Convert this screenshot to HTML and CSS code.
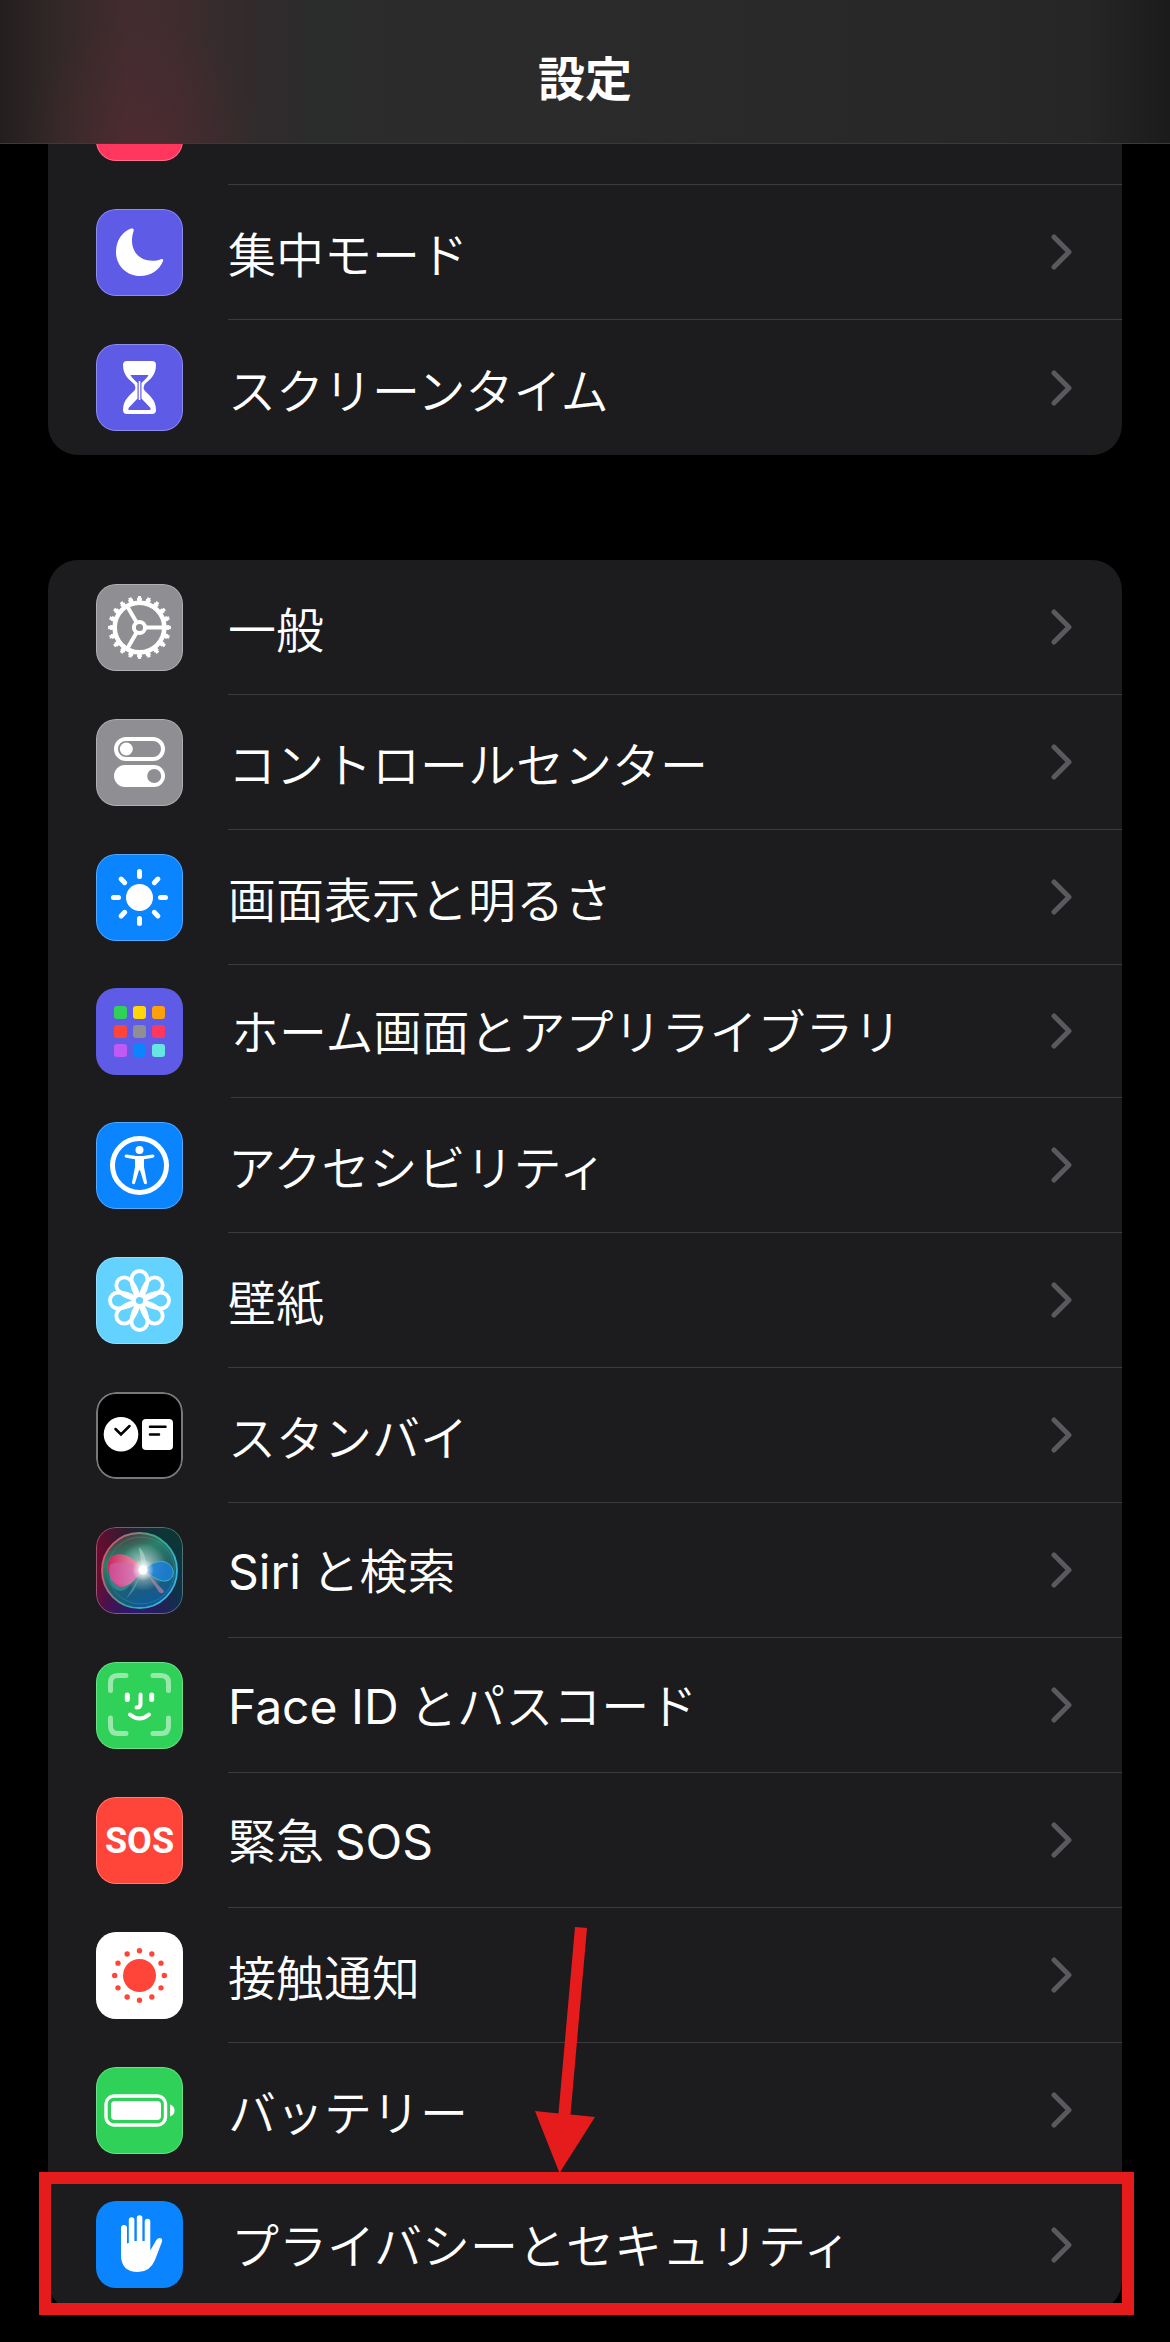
FILE: index.html
```html
<!DOCTYPE html>
<html lang="ja">
<head>
    <meta charset="UTF-8">
    <meta name="viewport" content="width=device-width, initial-scale=1.0">
    <title>設定</title>
    <link rel="stylesheet" href="styles.css">
</head>
<body>
    <svg class="defs" aria-hidden="true">
        <symbol id="chevron" viewBox="0 0 22 36">
            <path d="M3 3 L18 18 L3 33" fill="none" stroke="currentColor" stroke-width="5" stroke-linecap="round" stroke-linejoin="round"/>
        </symbol>
    </svg>

    <header class="header">
        <h1 class="title">設定</h1>
    </header>

    <main class="settings">
        <div class="group">
            <div class="row">
                <span class="icon pink"></span>
                <span class="row-body"></span>
            </div>
            <a class="row" href="#focus">
                <span class="icon indigo">
                    <svg viewBox="0 0 87 87" fill="#fff">
                        <path d="M35 19.6C26 23 20 32 20 43C20 56.5 30.5 67 44 67C54.5 67 63.5 61 67 52C67.6 50.3 66.5 49.6 65 50.2C62 51.3 59.5 51.7 56.5 51.7C44 51.7 36 43.5 36 31.5C36 28 36.6 25 37.6 22C38.2 20 37 19 35 19.6Z"/>
                    </svg>
                </span>
                <span class="row-body"><span class="label">集中モード</span><svg class="chevron"><use href="#chevron"/></svg></span>
            </a>
            <a class="row" href="#screentime">
                <span class="icon indigo">
                    <svg viewBox="0 0 87 87">
                        <path fill="#fff" d="M31 17H56Q60 17 60 21C60 32 53 36 48.5 40.5Q46.8 43.5 48.5 46.5C53 51 60 56 60 66Q60 70 56 70H31Q27 70 27 66C27 56 34 51 38.5 46.5Q40.2 43.5 38.5 40.5C34 36 27 32 27 21Q27 17 31 17Z"/>
                        <path fill="#5e5ce6" d="M34.5 31H52.5Q52 33 45.5 39V54.5L54.5 64V66H32.5V64L41.5 54.5V39Q35 33 34.5 31Z"/>
                        <path stroke="#fff" stroke-width="1.6" d="M43.5 37V56"/>
                    </svg>
                </span>
                <span class="row-body"><span class="label">スクリーンタイム</span><svg class="chevron"><use href="#chevron"/></svg></span>
            </a>
        </div>

        <div class="group">
            <a class="row" href="#general">
                <span class="icon gray">
                    <svg viewBox="0 0 87 87" fill="none" stroke="#fff">
                        <circle cx="43.5" cy="43.5" r="24.8" stroke-width="4.6"/>
                        <circle cx="43.5" cy="43.5" r="28" stroke-width="3" pathLength="40" stroke-dasharray="1.1 0.9" stroke-dashoffset="0.55"/>
                        <circle cx="43.5" cy="43.5" r="30" stroke-width="2.8" pathLength="40" stroke-dasharray="0.7 1.3" stroke-dashoffset="0.35"/>
                        <circle cx="43.5" cy="43.5" r="5.6" stroke-width="4"/>
                        <path stroke-width="4" d="M50 43.5H67M40.2 37.8L31.5 22.7M40.2 49.2L31.5 64.3"/>
                    </svg>
                </span>
                <span class="row-body"><span class="label">一般</span><svg class="chevron"><use href="#chevron"/></svg></span>
            </a>
            <a class="row" href="#control">
                <span class="icon gray">
                    <svg viewBox="0 0 87 87" fill="#fff">
                        <rect x="20" y="20" width="47" height="20" rx="10" fill="none" stroke="#fff" stroke-width="4"/>
                        <circle cx="30.3" cy="30" r="6.5"/>
                        <rect x="18" y="46" width="51" height="22" rx="11"/>
                        <circle cx="58.2" cy="57" r="7" fill="#8e8e93"/>
                    </svg>
                </span>
                <span class="row-body"><span class="label">コントロールセンター</span><svg class="chevron"><use href="#chevron"/></svg></span>
            </a>
            <a class="row" href="#display">
                <span class="icon blue">
                    <svg viewBox="0 0 87 87" fill="#fff" stroke="#fff">
                        <circle cx="43.5" cy="43.5" r="13.5" stroke="none"/>
                        <path stroke-width="5" stroke-linecap="round" d="M43.5 17.5V22.5M43.5 64.5V69.5M17.5 43.5H22.5M64.5 43.5H69.5M25.1 25.1L28.7 28.7M58.3 58.3L61.9 61.9M25.1 61.9L28.7 58.3M58.3 28.7L61.9 25.1"/>
                    </svg>
                </span>
                <span class="row-body"><span class="label">画面表示と明るさ</span><svg class="chevron"><use href="#chevron"/></svg></span>
            </a>
            <a class="row compact" href="#home">
                <span class="icon indigo flat">
                    <svg viewBox="0 0 87 87">
                        <rect x="18" y="18" width="13" height="13" rx="3" fill="#30d158"/>
                        <rect x="37" y="18" width="13" height="13" rx="3" fill="#ffd60a"/>
                        <rect x="56" y="18" width="13" height="13" rx="3" fill="#ff9f0a"/>
                        <rect x="18" y="37" width="13" height="13" rx="3" fill="#ff453a"/>
                        <rect x="37" y="37" width="13" height="13" rx="3" fill="#8e8e93"/>
                        <rect x="56" y="37" width="13" height="13" rx="3" fill="#ff375f"/>
                        <rect x="18" y="56" width="13" height="13" rx="3" fill="#bf5af2"/>
                        <rect x="37" y="56" width="13" height="13" rx="3" fill="#0a84ff"/>
                        <rect x="56" y="56" width="13" height="13" rx="3" fill="#66e6e2"/>
                    </svg>
                </span>
                <span class="row-body"><span class="label">ホーム画面とアプリライブラリ</span><svg class="chevron"><use href="#chevron"/></svg></span>
            </a>
            <a class="row" href="#accessibility">
                <span class="icon blue">
                    <svg viewBox="0 0 87 87" fill="#fff">
                        <circle cx="43.5" cy="43.5" r="27" fill="none" stroke="#fff" stroke-width="5"/>
                        <circle cx="43.5" cy="28" r="4"/>
                        <path d="M30.5 32.5L40 34H47L56.5 32.5Q58.3 32.4 58.5 34Q58.5 35.3 57 35.7L48 37.3V45L51 60.5Q51 62 49.6 62.2Q48.4 62.3 48 61.3L44 48.3H43L39 61.3Q38.6 62.3 37.4 62.2Q36 62 36 60.5L39 45V37.3L30 35.7Q28.5 35.3 28.5 34Q28.7 32.4 30.5 32.5Z"/>
                    </svg>
                </span>
                <span class="row-body"><span class="label">アクセシビリティ</span><svg class="chevron"><use href="#chevron"/></svg></span>
            </a>
            <a class="row" href="#wallpaper">
                <span class="icon sky">
                    <svg viewBox="0 0 87 87" fill="none" stroke="#fff" stroke-width="3.8">
                        <path id="petal" d="M43.5 43.5C39 37 35.5 29 35.5 22A8 8 0 0 1 51.5 22C51.5 29 48 37 43.5 43.5Z"/>
                        <use href="#petal" transform="rotate(45 43.5 43.5)"/>
                        <use href="#petal" transform="rotate(90 43.5 43.5)"/>
                        <use href="#petal" transform="rotate(135 43.5 43.5)"/>
                        <use href="#petal" transform="rotate(180 43.5 43.5)"/>
                        <use href="#petal" transform="rotate(225 43.5 43.5)"/>
                        <use href="#petal" transform="rotate(270 43.5 43.5)"/>
                        <use href="#petal" transform="rotate(315 43.5 43.5)"/>
                        <circle cx="43.5" cy="43.5" r="5.5" fill="#64d2ff"/>
                    </svg>
                </span>
                <span class="row-body"><span class="label">壁紙</span><svg class="chevron"><use href="#chevron"/></svg></span>
            </a>
            <a class="row" href="#standby">
                <span class="icon black">
                    <svg viewBox="0 0 87 87" fill="#fff">
                        <circle cx="25" cy="42.3" r="17.3"/>
                        <rect x="46" y="27" width="31" height="31" rx="4"/>
                        <path fill="none" stroke="#000" stroke-width="2.5" stroke-linecap="round" d="M19.5 37L25 42.5L33.5 34M54 34.7H69.5M54 42.5H63"/>
                    </svg>
                </span>
                <span class="row-body"><span class="label">スタンバイ</span><svg class="chevron"><use href="#chevron"/></svg></span>
            </a>
            <a class="row" href="#siri">
                <span class="icon siri">
                    <svg viewBox="0 0 87 87" fill="none">
                        <defs>
                            <linearGradient id="rim" x1="0" y1="0.3" x2="1" y2="0.7">
                                <stop offset="0" stop-color="#e0526e"/>
                                <stop offset="0.55" stop-color="#2fae8a"/>
                                <stop offset="1" stop-color="#3fb4e8"/>
                            </linearGradient>
                            <linearGradient id="orb" x1="0.2" y1="0" x2="0.6" y2="1">
                                <stop offset="0" stop-color="#5c2a35"/>
                                <stop offset="0.3" stop-color="#2a806a"/>
                                <stop offset="0.6" stop-color="#23606a"/>
                                <stop offset="1" stop-color="#0c58a0"/>
                            </linearGradient>
                            <linearGradient id="left-wave" x1="0" y1="0" x2="1" y2="0">
                                <stop offset="0" stop-color="#e01c5c"/>
                                <stop offset="1" stop-color="#f0a9ba"/>
                            </linearGradient>
                            <radialGradient id="glow">
                                <stop offset="0" stop-color="#fff"/>
                                <stop offset="0.25" stop-color="#fff" stop-opacity="0.8"/>
                                <stop offset="1" stop-color="#fff" stop-opacity="0"/>
                            </radialGradient>
                        </defs>
                        <circle cx="43.5" cy="43.5" r="37.5" fill="url(#orb)" stroke="url(#rim)" stroke-width="1.8"/>
                        <circle cx="45" cy="43.5" r="33.5" stroke="#2f9c86" stroke-opacity="0.5"/>
                        <circle cx="47" cy="40" r="24" fill="url(#glow)" fill-opacity="0.7"/>
                        <path fill="#3aa7b8" fill-opacity="0.5" d="M47 43C37 52 33 64 24 64C15 62 12 52 14 44Z"/>
                        <path fill="url(#left-wave)" fill-opacity="0.9" d="M47 43C37 28 24 24 15 30C8 38 14 57 24 60C34 61 40 50 47 43Z"/>
                        <path fill="#d06ac0" fill-opacity="0.5" d="M47 43C37 35 20 33 14 38C11 49 16 58 26 58C35 57 41 49 47 43Z"/>
                        <path fill="#1c7fd8" fill-opacity="0.85" stroke="#35b9c9" d="M48 43C56 36 63 33 69 35C78 38 80 49 73 53C65 57 56 49 48 43Z"/>
                        <path fill="#d08aa2" fill-opacity="0.6" d="M49 44L68 64Q67 68 63 65Z"/>
                        <path fill="#6fb2d0" fill-opacity="0.5" d="M46 45L30 72L38 63Z"/>
                        <path fill="#bfe8d9" fill-opacity="0.5" d="M46 42L43 20Q50 26 51 42Z"/>
                        <circle cx="47" cy="43" r="11" fill="url(#glow)"/>
                        <circle cx="47" cy="43" r="4.5" fill="#fff"/>
                    </svg>
                </span>
                <span class="row-body"><span class="label"><span class="latin">Siri</span> と検索</span><svg class="chevron"><use href="#chevron"/></svg></span>
            </a>
            <a class="row" href="#faceid">
                <span class="icon green">
                    <svg viewBox="0 0 87 87" fill="none" stroke="#fff" stroke-width="5" stroke-linecap="round">
                        <path stroke-opacity="0.5" d="M14.5 28.5V21Q14.5 13.5 22 13.5H30M57 13.5H65Q72.5 13.5 72.5 21V28.5M14.5 56V64Q14.5 71.5 22 71.5H30M57 71.5H65Q72.5 71.5 72.5 64V56"/>
                        <path d="M31.3 33V37.5M55.7 33V37.5"/>
                        <path stroke-width="4" d="M44.5 32.5V42Q44.5 45.5 40.5 45.5"/>
                        <path stroke-width="4" d="M34 52.5Q43.5 60.5 53 52.5"/>
                    </svg>
                </span>
                <span class="row-body"><span class="label"><span class="latin">Face ID</span> とパスコード</span><svg class="chevron"><use href="#chevron"/></svg></span>
            </a>
            <a class="row" href="#sos">
                <span class="icon red"><span class="sos">SOS</span></span>
                <span class="row-body"><span class="label">緊急 <span class="latin">SOS</span></span><svg class="chevron"><use href="#chevron"/></svg></span>
            </a>
            <a class="row" href="#exposure">
                <span class="icon white">
                    <svg viewBox="0 0 87 87" fill="none" stroke="#ff453a">
                        <circle cx="43.5" cy="43.5" r="16.5" fill="#ff453a" stroke="none"/>
                        <circle cx="43.5" cy="43.5" r="24.8" stroke-width="5.4" stroke-linecap="round" pathLength="12" stroke-dasharray="0 1"/>
                    </svg>
                </span>
                <span class="row-body"><span class="label">接触通知</span><svg class="chevron"><use href="#chevron"/></svg></span>
            </a>
            <a class="row" href="#battery">
                <span class="icon green">
                    <svg viewBox="0 0 87 87" fill="#fff">
                        <rect x="10" y="29" width="59.5" height="29" rx="8" fill="none" stroke="#fff" stroke-width="3.4"/>
                        <rect x="15" y="34" width="50" height="19" rx="4"/>
                        <path d="M74 37.5Q78.5 39 78.5 43.5T74 49.5Z"/>
                    </svg>
                </span>
                <span class="row-body"><span class="label">バッテリー</span><svg class="chevron"><use href="#chevron"/></svg></span>
            </a>
            <a class="row compact marked" href="#privacy">
                <span class="icon blue flat">
                    <svg viewBox="0 0 87 87" fill="#fff">
                        <path d="M25 27a3 3 0 0 1 6 0V42.5L32.8 42V19a2.8 2.8 0 0 1 5.6 0V40H40.8V17a2.8 2.8 0 0 1 5.6 0V40H48.7V20.5a2.8 2.8 0 0 1 5.6 0V49.5L60 39.5Q62 36 65 37.3Q67 38.5 65.5 42L59 59Q54 71 42 71Q25 71 25 54Z"/>
                    </svg>
                </span>
                <span class="row-body"><span class="label">プライバシーとセキュリティ</span><svg class="chevron"><use href="#chevron"/></svg></span>
                <svg class="arrow" viewBox="0 0 62 248" fill="#e61c1c">
                    <path d="M41 1L53 2L36.5 188.5L61 191L25.5 247L1 185L24.5 187.5Z"/>
                </svg>
            </a>
        </div>
    </main>
</body>
</html>
```

FILE: styles.css
```css
* {
    box-sizing: border-box;
}
body {
    margin: 0;
    min-height: 100vh;
    background: #000;
    color: #fff;
    font-family: "Noto Sans CJK JP", sans-serif;
}
.defs {
    position: absolute;
    width: 0;
    height: 0;
}

/* header bar, the list scrolls under it */
.header {
    position: fixed;
    top: 0;
    left: 0;
    right: 0;
    z-index: 2;
    height: 144px;
    padding-top: 8px;
    display: flex;
    justify-content: center;
    align-items: center;
    border-bottom: 1px solid #3a3a3b;
    background:
        radial-gradient(ellipse 10% 90% at 12% 100%, rgba(92, 42, 52, 0.4), rgba(92, 42, 52, 0)),
        linear-gradient(90deg, #231f1f 0%, #332828 5%, #422c2f 11%, #402c2f 14%, #322b2c 21%, #2b2c2c 27%, #2b2b2c 45%, #282828 80%, #262626 93%, #1b1b1b 100%);
}
.title {
    margin: 0;
    font-size: 47px;
    line-height: 60px;
    font-weight: 700;
}

.settings {
    padding: 50px 48px 31px;
}
.group {
    background: #1c1c1e;
    border-radius: 30px;
}
.group + .group {
    margin-top: 105px;
}
.row {
    position: relative;
    display: flex;
    align-items: center;
    gap: 45px;
    height: 135px;
    padding-left: 48px;
    color: inherit;
    text-decoration: none;
}
.row.compact {
    height: 133px;
    gap: 48px;
}
.row-body {
    flex: 1;
    align-self: stretch;
    display: flex;
    justify-content: space-between;
    align-items: center;
    padding-right: 49px;
    border-bottom: 1px solid #3b3b3d;
}
.row:last-child .row-body {
    border-bottom: none;
}
.label {
    font-size: 48px;
    line-height: 60px;
    font-weight: 350;
    white-space: nowrap;
}
.compact .label {
    padding-bottom: 4px;
}
.latin {
    font-family: Inter, sans-serif;
    font-weight: 400;
}
.chevron {
    width: 22px;
    height: 36px;
    color: #5a5a5e;
}

.icon {
    position: relative;
    flex: none;
    display: flex;
    justify-content: center;
    align-items: center;
    width: 87px;
    height: 87px;
    border-radius: 20px;
    overflow: hidden;
}
.icon::after {
    content: "";
    position: absolute;
    inset: 0;
    border: 1px solid rgba(255, 255, 255, 0.3);
    border-radius: 20px;
}
.icon.flat::after {
    border: none;
}
.icon svg {
    width: 100%;
    height: 100%;
}
.pink {
    background: #ff375f;
}
.indigo {
    background: #5e5ce6;
}
.gray {
    background: #8e8e93;
}
.blue {
    background: #0a84ff;
}
.sky {
    background: #64d2ff;
}
.black {
    background: #000;
}
.black::after {
    border: 2px solid #78787b;
}
.green {
    background: #30d158;
}
.red {
    background: #ff453a;
}
.white {
    background: #fff;
}
.siri {
    background:
        radial-gradient(circle at 100% 0%, #0a3832, rgba(10, 56, 50, 0) 70%),
        radial-gradient(circle at 45% 100%, #2b1a78, rgba(43, 26, 120, 0) 50%),
        linear-gradient(90deg, #6e0c30, #3a1030 40%, #0c3350);
}
.sos {
    font-family: Roboto, sans-serif;
    font-size: 36px;
    line-height: 40px;
    font-weight: 700;
}

/* highlight round the privacy row */
.marked::after {
    content: "";
    position: absolute;
    top: -6px;
    right: -12px;
    bottom: -4px;
    left: -9px;
    border: 12px solid #e61c1c;
}
.arrow {
    position: absolute;
    left: calc(45% + 3px);
    bottom: 137px;
    width: 62px;
    height: 248px;
}
```
